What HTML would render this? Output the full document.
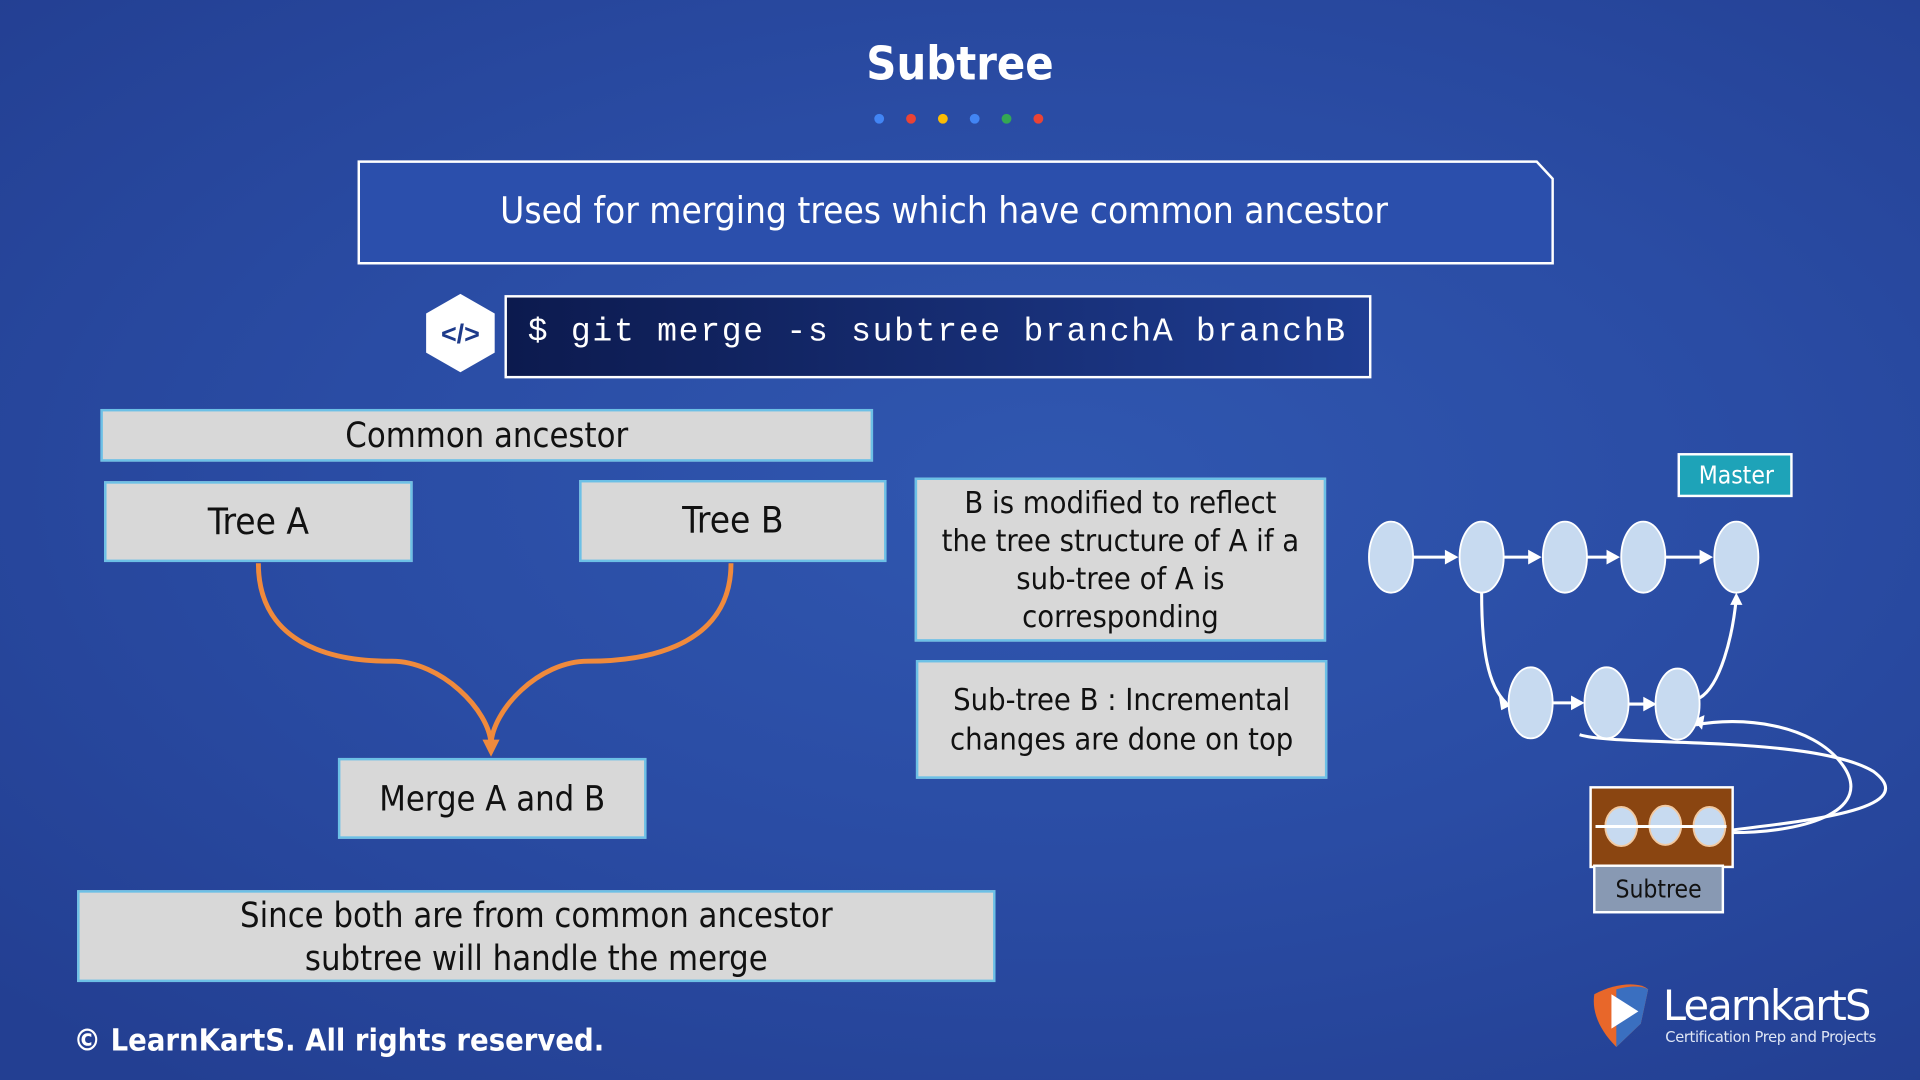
<!DOCTYPE html>
<html><head><meta charset="utf-8"><style>
html,body{margin:0;padding:0;width:1920px;height:1080px;overflow:hidden;background:#2847a0}
#w{position:absolute;left:0;top:0;width:1568px;height:882px;transform:scale(1.22449);transform-origin:0 0;
background:radial-gradient(ellipse 75% 70% at 55% 45%,#3057b0 0%,#2a4ca4 50%,#233f92 100%);font-family:"Liberation Sans",sans-serif;overflow:hidden}
.a{position:absolute}
.g{position:absolute;background:#d8d8d8;border:2px solid #6cc0e6;box-sizing:border-box;color:#111;display:flex;align-items:center;justify-content:center;text-align:center;font-family:"DejaVu Sans Condensed","Liberation Sans",sans-serif}
</style></head><body><div id="w">
<div class="a" style="left:0;width:1568px;top:30px;text-align:center;color:#fff;font:bold 38px 'DejaVu Sans Condensed','Liberation Sans',sans-serif">Subtree</div>
<svg class="a" style="left:0;top:0" width="1568" height="882">
<circle cx="718" cy="97" r="4" fill="#4285f4"/><circle cx="744" cy="97" r="4" fill="#ea4335"/><circle cx="770" cy="97" r="4" fill="#fbbc05"/><circle cx="796" cy="97" r="4" fill="#4285f4"/><circle cx="822" cy="97" r="4" fill="#34a853"/><circle cx="848" cy="97" r="4" fill="#ea4335"/>
<path d="M293 132 H1255 L1268 146 V215 H293 Z" fill="#2b4fac" stroke="#fff" stroke-width="2"/>
<polygon points="376,240 404,256 404,288 376,304 348,288 348,256" fill="#fff"/>
<text x="376" y="280" text-anchor="middle" font-family="Liberation Sans" font-weight="bold" font-size="22" fill="#1d3a8a">&lt;/&gt;</text>
<defs><linearGradient id="cg" x1="0" x2="1"><stop offset="0" stop-color="#0c1a4e"/><stop offset="1" stop-color="#1f3d92"/></linearGradient></defs>
<rect x="413" y="242" width="706" height="66" fill="url(#cg)" stroke="#fff" stroke-width="2"/>
<g fill="none" stroke="#f08a3c" stroke-width="4">
<path d="M211 460 C211 540 300 540 320 540 C360 540 400 580 401 608"/>
<path d="M597 460 C597 540 500 540 480 540 C440 540 402 580 401 608"/>
</g>
<polygon points="394,604 408,604 401,618" fill="#f08a3c"/>
<g stroke="#fff" stroke-width="2.5" fill="none">
<path d="M1154 455 H1188"/><path d="M1228 455 H1256"/><path d="M1296 455 H1320"/><path d="M1360 455 H1396"/>
<path d="M1210 484 C1210 530 1215 560 1230 574"/>
<path d="M1268 574 H1292"/><path d="M1330 575 H1350"/>
<path d="M1388 570 C1405 560 1415 520 1418 488"/>
<path d="M1290 600 C1320 610 1480 600 1530 630 C1570 660 1480 670 1413 678"/>
<path d="M1413 680 C1480 680 1530 660 1505 625 C1480 590 1420 585 1385 592"/>
<path d="M1413 677 H1303"/>
</g>
<g fill="#fff"><polygon points="1180,449 1180,461 1191,455"/><polygon points="1248,449 1248,461 1259,455"/><polygon points="1312,449 1312,461 1323,455"/><polygon points="1388,449 1388,461 1399,455"/><polygon points="1224,568 1234,576 1226,580"/><polygon points="1283,568 1283,580 1294,574"/><polygon points="1342,569 1342,581 1353,575"/><polygon points="1413,494 1423,494 1418,484"/><polygon points="1383,588 1392,584 1390,596"/><polygon points="1299,677 1308,672 1308,682"/></g>
<g fill="#c7daf0" stroke="#fff" stroke-width="1.5">
<ellipse cx="1136" cy="455" rx="18" ry="29"/><ellipse cx="1210" cy="455" rx="18" ry="29"/><ellipse cx="1278" cy="455" rx="18" ry="29"/><ellipse cx="1342" cy="455" rx="18" ry="29"/><ellipse cx="1418" cy="455" rx="18" ry="29"/>
<ellipse cx="1250" cy="574" rx="18" ry="29"/><ellipse cx="1312" cy="574" rx="18" ry="29"/><ellipse cx="1370" cy="575" rx="18" ry="29"/>
</g>
<rect x="1299" y="643" width="116" height="65" fill="#8a4511" stroke="#fff" stroke-width="2"/>
<g fill="#c7daf0" stroke="#f3c9a0" stroke-width="1.5"><ellipse cx="1324" cy="675" rx="13" ry="16"/><ellipse cx="1360" cy="674" rx="13" ry="16"/><ellipse cx="1396" cy="675" rx="13" ry="16"/></g>
<path d="M1303 675 H1410" stroke="#fff" stroke-width="2.5"/>
<rect x="1302" y="707" width="105" height="38" fill="#8899b3" stroke="#fff" stroke-width="2"/>
<rect x="1371" y="371" width="92" height="34" fill="#1ea3b8" stroke="#fff" stroke-width="2"/>
<path d="M1302 812 C1320 802 1340 802 1346 808 L1340 836 L1320 855 C1305 840 1300 825 1302 812Z" fill="#e8672a"/>
<path d="M1320 808 C1335 804 1342 806 1346 808 L1340 836 L1320 855Z" fill="#3a6fc0"/>
<polygon points="1316,812 1338,826 1316,840" fill="#fff"/>
</svg>
<div class="a" style="left:283px;width:976px;top:155px;text-align:center;color:#fff;font:30px 'DejaVu Sans Condensed','Liberation Sans',sans-serif">Used for merging trees which have common ancestor</div>
<div class="a" style="left:431px;top:257px;color:#fff;font:27px 'Liberation Mono',monospace;letter-spacing:1.4px;white-space:pre">$ git merge -s subtree branchA branchB</div>
<div class="g" style="left:82px;top:334px;width:631px;height:43px;font-size:28px">Common ancestor</div>
<div class="g" style="left:85px;top:393px;width:252px;height:66px;font-size:30px">Tree A</div>
<div class="g" style="left:473px;top:392px;width:251px;height:67px;font-size:30px">Tree B</div>
<div class="g" style="left:276px;top:619px;width:252px;height:66px;font-size:28px">Merge A and B</div>
<div class="g" style="left:747px;top:390px;width:336px;height:134px;font-size:25px;line-height:31px">B is modified to reflect<br>the tree structure of A if a<br>sub-tree of A is<br>corresponding</div>
<div class="g" style="left:748px;top:539px;width:336px;height:97px;font-size:25px;line-height:32px">Sub-tree B : Incremental<br>changes are done on top</div>
<div class="g" style="left:63px;top:727px;width:750px;height:75px;font-size:28px;line-height:35px">Since both are from common ancestor<br>subtree will handle the merge</div>
<div class="a" style="left:1371px;width:94px;top:376px;text-align:center;color:#fff;font:20px 'DejaVu Sans Condensed',sans-serif">Master</div>
<div class="a" style="left:1302px;width:105px;top:714px;text-align:center;color:#111;font:20px 'DejaVu Sans Condensed',sans-serif">Subtree</div>
<div class="a" style="left:60px;top:835px;color:#fff;font:bold 25px 'DejaVu Sans Condensed','Liberation Sans',sans-serif">© LearnKartS. All rights reserved.</div>
<div class="a" style="left:1358px;top:802px;color:#fff;font:34px 'DejaVu Sans',sans-serif;letter-spacing:-1.5px">LearnkartS</div>
<div class="a" style="left:1360px;top:840px;color:#dfe6f5;font:12px 'DejaVu Sans',sans-serif;letter-spacing:-0.3px">Certification Prep and Projects</div>
</div></body></html>
